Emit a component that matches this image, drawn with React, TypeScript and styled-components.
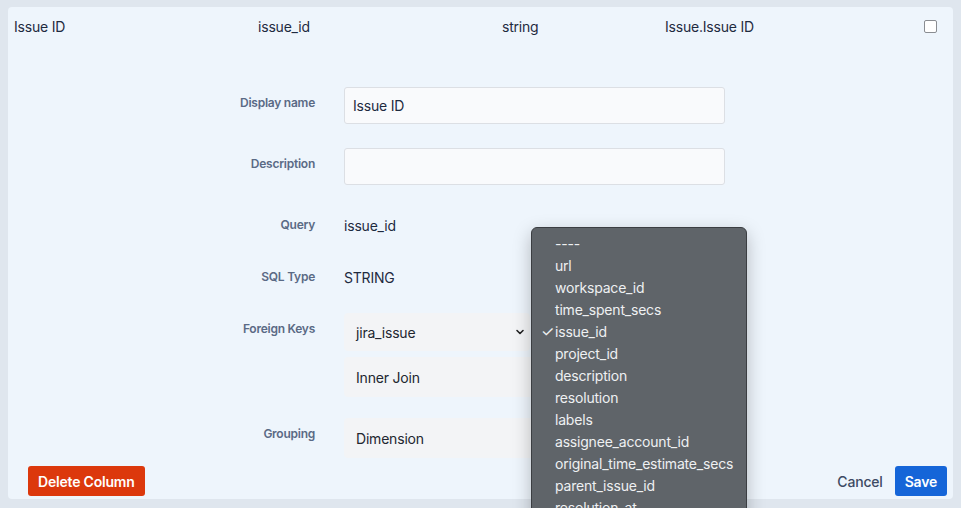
import React from 'react';
import styled, { createGlobalStyle } from 'styled-components';

const GlobalStyle = createGlobalStyle`
  html, body {
    margin: 0;
    padding: 0;
    height: 100%;
    overflow: hidden;
    background: #dfe6ee;
    font-family: Inter, "Noto Sans", "Liberation Sans", sans-serif;
    color: #1e2a3f;
    letter-spacing: -0.2px;
  }
`;

const Page = styled.div`
  padding: 7px 8px 9px 8px;
`;

const Panel = styled.div`
  background: #eef5fc;
  border-radius: 4px;
  height: 492px;
  display: flex;
  flex-direction: column;
`;

const HeadRow = styled.div`
  display: grid;
  grid-template-columns: 244px 244px 163px 1fr auto;
  align-items: center;
  height: 38px;
  padding: 0 16px 0 6px;
  font-size: 14px;
`;

const CheckBox = styled.span`
  display: block;
  width: 11px;
  height: 11px;
  border: 1px solid #8a8d92;
  border-radius: 2px;
  background: #fff;
`;

const Form = styled.div`
  display: flex;
  flex-direction: column;
  gap: 24px;
  padding-top: 42px;
  flex: 1;
`;

const Field = styled.div<{ $gapAfter?: number }>`
  display: grid;
  grid-template-columns: 307px 381px;
  column-gap: 29px;
  margin-bottom: ${(p) => (p.$gapAfter ? p.$gapAfter - 24 : 0)}px;
`;

const Label = styled.div`
  text-align: right;
  font-size: 12px;
  font-weight: 600;
  line-height: 14px;
  padding-top: 9px;
  color: #5a6a85;
  letter-spacing: -0.25px;
`;

const TextInput = styled.div`
  box-sizing: border-box;
  height: 37px;
  border: 1px solid #dcdfe4;
  border-radius: 3px;
  background: #f9fafc;
  padding: 0 8px;
  display: flex;
  align-items: center;
  font-size: 14px;
`;

const Value = styled.div`
  font-size: 14px;
  line-height: 17px;
  padding: 8px 0 3px;
`;

const SelectStack = styled.div`
  position: relative;
  display: flex;
  flex-direction: column;
  gap: 6px;
`;

const SelectLine = styled.div`
  display: flex;
  gap: 1px;
`;

const Select = styled.div<{ $w: number; $h: number }>`
  box-sizing: border-box;
  width: ${(p) => p.$w}px;
  height: ${(p) => p.$h}px;
  background: #f3f4f6;
  border-radius: 4px;
  padding: 0 5px 0 12px;
  display: flex;
  align-items: center;
  justify-content: space-between;
  font-size: 14px;
  color: #222630;
`;

const Chevron = () => (
  <svg width="10" height="10" viewBox="0 0 10 10">
    <path d="M2 3.5 L5 6.5 L8 3.5" fill="none" stroke="#222" strokeWidth="1.6" strokeLinecap="round" strokeLinejoin="round" />
  </svg>
);

const Popup = styled.div`
  position: absolute;
  left: 187px;
  top: -86px;
  width: 216px;
  box-sizing: border-box;
  background: #5f6469;
  border: 1px solid #3b3e42;
  border-radius: 6px;
  box-shadow: 0 6px 18px rgba(0, 0, 0, 0.25);
  padding: 5px 0 10px;
  z-index: 10;
`;

const Option = styled.div`
  position: relative;
  height: 22px;
  line-height: 22px;
  padding-left: 23px;
  font-size: 14px;
  color: #eef0f2;
  white-space: nowrap;
`;

const Check = styled.span`
  position: absolute;
  left: 9px;
  top: 0;
  font-size: 15px;
`;

const Footer = styled.div`
  display: flex;
  align-items: center;
  height: 30px;
  padding: 0 6px 3px 20px;
`;

const Button = styled.button<{ $bg: string }>`
  height: 30px;
  border: none;
  border-radius: 3px;
  background: ${(p) => p.$bg};
  color: #fff;
  font-family: inherit;
  font-size: 14px;
  font-weight: 600;
  letter-spacing: -0.2px;
  padding: 0 10px;
`;

const Cancel = styled.span`
  margin-left: auto;
  margin-right: 12px;
  font-size: 14px;
  font-weight: 500;
  color: #3d4a63;
`;

const options = [
  '----',
  'url',
  'workspace_id',
  'time_spent_secs',
  'issue_id',
  'project_id',
  'description',
  'resolution',
  'labels',
  'assignee_account_id',
  'original_time_estimate_secs',
  'parent_issue_id',
  'resolution_at',
];

const App = () => {
  return (
    <Page>
      <GlobalStyle />
      <Panel>
        <HeadRow>
          <span>Issue ID</span>
          <span>issue_id</span>
          <span>string</span>
          <span>Issue.Issue ID</span>
          <CheckBox />
        </HeadRow>
        <Form>
          <Field>
            <Label>Display name</Label>
            <TextInput>Issue ID</TextInput>
          </Field>
          <Field>
            <Label>Description</Label>
            <TextInput />
          </Field>
          <Field>
            <Label>Query</Label>
            <Value>issue_id</Value>
          </Field>
          <Field>
            <Label>SQL Type</Label>
            <Value>STRING</Value>
          </Field>
          <Field $gapAfter={21}>
            <Label>Foreign Keys</Label>
            <SelectStack>
              <SelectLine>
                <Select $w={186} $h={38}>
                  jira_issue
                  <Chevron />
                </Select>
                <Select $w={194} $h={38} />
              </SelectLine>
              <Select $w={381} $h={40}>Inner Join</Select>
              <Popup>
                {options.map((o) => (
                  <Option key={o}>
                    {o === 'issue_id' && <Check>✓</Check>}
                    {o}
                  </Option>
                ))}
              </Popup>
            </SelectStack>
          </Field>
          <Field>
            <Label>Grouping</Label>
            <Select $w={381} $h={40}>Dimension</Select>
          </Field>
        </Form>
        <Footer>
          <Button $bg="#dc380c">Delete Column</Button>
          <Cancel>Cancel</Cancel>
          <Button $bg="#1565d8">Save</Button>
        </Footer>
      </Panel>
    </Page>
  );
};

export default App;
